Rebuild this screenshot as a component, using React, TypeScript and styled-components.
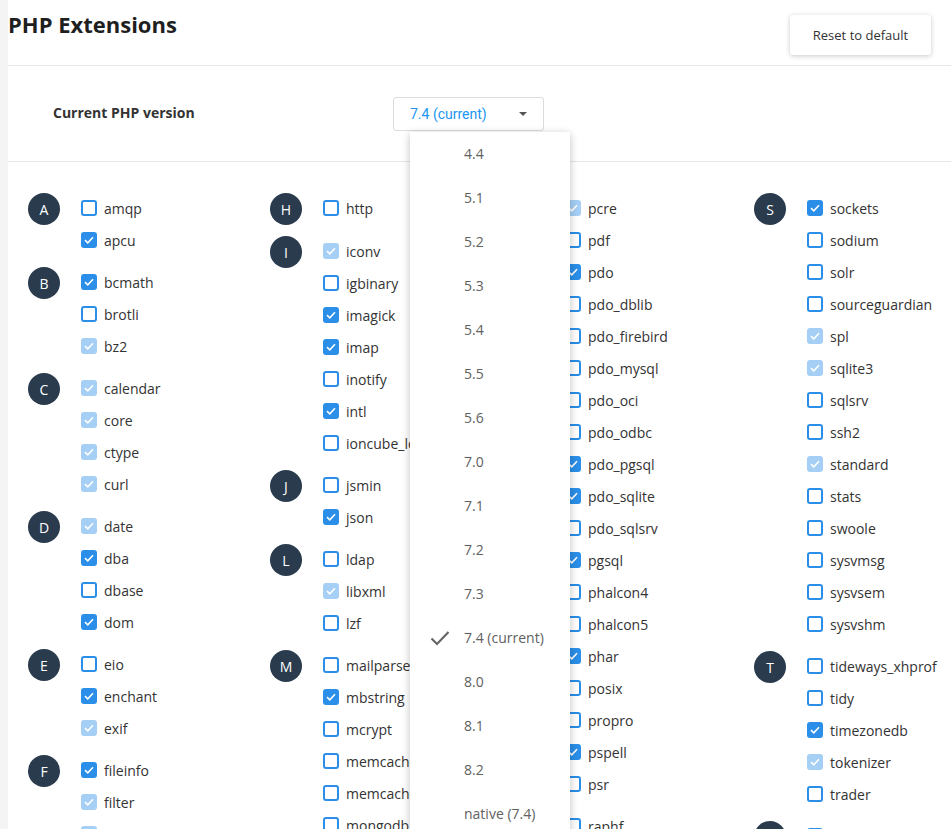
import React from 'react'
import styled, { createGlobalStyle } from 'styled-components'

const GlobalStyle = createGlobalStyle`
  html, body {
    margin: 0;
    padding: 0;
    overflow: hidden;
    background: #f4f4f4;
  }
  body {
    font-family: 'Open Sans', 'Liberation Sans', sans-serif;
    color: #333;
  }
`

type State = 'off' | 'on' | 'fixed'

interface Group {
  letter: string
  items: [string, State][]
}

const COLUMNS: Group[][] = [
  [
    { letter: 'A', items: [['amqp', 'off'], ['apcu', 'on']] },
    { letter: 'B', items: [['bcmath', 'on'], ['brotli', 'off'], ['bz2', 'fixed']] },
    { letter: 'C', items: [['calendar', 'fixed'], ['core', 'fixed'], ['ctype', 'fixed'], ['curl', 'fixed']] },
    { letter: 'D', items: [['date', 'fixed'], ['dba', 'on'], ['dbase', 'off'], ['dom', 'on']] },
    { letter: 'E', items: [['eio', 'off'], ['enchant', 'on'], ['exif', 'fixed']] },
    { letter: 'F', items: [['fileinfo', 'on'], ['filter', 'fixed'], ['ftp', 'fixed']] },
  ],
  [
    { letter: 'H', items: [['http', 'off']] },
    {
      letter: 'I',
      items: [
        ['iconv', 'fixed'],
        ['igbinary', 'off'],
        ['imagick', 'on'],
        ['imap', 'on'],
        ['inotify', 'off'],
        ['intl', 'on'],
        ['ioncube_loader', 'off'],
      ],
    },
    { letter: 'J', items: [['jsmin', 'off'], ['json', 'on']] },
    { letter: 'L', items: [['ldap', 'off'], ['libxml', 'fixed'], ['lzf', 'off']] },
    {
      letter: 'M',
      items: [
        ['mailparse', 'off'],
        ['mbstring', 'on'],
        ['mcrypt', 'off'],
        ['memcache', 'off'],
        ['memcached', 'off'],
        ['mongodb', 'off'],
      ],
    },
  ],
  [
    {
      letter: 'P',
      items: [
        ['pcre', 'fixed'],
        ['pdf', 'off'],
        ['pdo', 'on'],
        ['pdo_dblib', 'off'],
        ['pdo_firebird', 'off'],
        ['pdo_mysql', 'off'],
        ['pdo_oci', 'off'],
        ['pdo_odbc', 'off'],
        ['pdo_pgsql', 'on'],
        ['pdo_sqlite', 'on'],
        ['pdo_sqlsrv', 'off'],
        ['pgsql', 'on'],
        ['phalcon4', 'off'],
        ['phalcon5', 'off'],
        ['phar', 'on'],
        ['posix', 'off'],
        ['propro', 'off'],
        ['pspell', 'on'],
        ['psr', 'off'],
      ],
    },
    { letter: 'R', items: [['raphf', 'off'], ['readline', 'fixed']] },
  ],
  [
    {
      letter: 'S',
      items: [
        ['sockets', 'on'],
        ['sodium', 'off'],
        ['solr', 'off'],
        ['sourceguardian', 'off'],
        ['spl', 'fixed'],
        ['sqlite3', 'fixed'],
        ['sqlsrv', 'off'],
        ['ssh2', 'off'],
        ['standard', 'fixed'],
        ['stats', 'off'],
        ['swoole', 'off'],
        ['sysvmsg', 'off'],
        ['sysvsem', 'off'],
        ['sysvshm', 'off'],
      ],
    },
    {
      letter: 'T',
      items: [
        ['tideways_xhprof', 'off'],
        ['tidy', 'off'],
        ['timezonedb', 'on'],
        ['tokenizer', 'fixed'],
        ['trader', 'off'],
      ],
    },
    { letter: 'U', items: [['uploadprogress', 'off']] },
  ],
]

const VERSIONS = ['4.4', '5.1', '5.2', '5.3', '5.4', '5.5', '5.6', '7.0', '7.1', '7.2', '7.3', '7.4 (current)', '8.0', '8.1', '8.2', 'native (7.4)']

const Page = styled.div`
  margin-left: 8px;
  min-height: 100vh;
  background: #fff;
`
const Header = styled.div`
  display: flex;
  justify-content: space-between;
  align-items: flex-start;
  height: 65px;
  border-bottom: 1px solid #e6e6e6;
  padding-right: 20px;
`
const Title = styled.h1`
  margin: 9px 0 0 0;
  font-size: 22px;
  font-weight: 700;
  color: #1f1f1f;
  line-height: 30px;
`
const ResetButton = styled.button`
  margin-top: 15px;
  width: 141px;
  height: 40px;
  border: none;
  border-radius: 3px;
  background: #fff;
  box-shadow: 0 1px 5px rgba(0, 0, 0, 0.22);
  font-family: 'Open Sans', 'Liberation Sans', sans-serif;
  font-size: 13px;
  color: #333;
`
const VersionRow = styled.div`
  display: flex;
  align-items: center;
  height: 95px;
  padding-left: 45px;
  border-bottom: 1px solid #e6e6e6;
`
const VersionLabel = styled.div`
  width: 340px;
  margin-top: -2px;
  font-size: 14px;
  font-weight: 700;
  color: #333;
`
const SelectWrap = styled.div`
  position: relative;
`
const SelectButton = styled.div`
  display: flex;
  align-items: center;
  justify-content: space-between;
  box-sizing: border-box;
  width: 151px;
  height: 34px;
  padding: 0 16px 0 16px;
  border: 1px solid #dcdcdc;
  border-radius: 3px;
  font-family: Roboto, 'Liberation Sans', sans-serif;
  font-size: 14px;
  color: #2196f3;
`
const Caret = styled.span`
  width: 0;
  height: 0;
  border-left: 4px solid transparent;
  border-right: 4px solid transparent;
  border-top: 4px solid #555;
`
const Menu = styled.div`
  position: absolute;
  top: 35px;
  left: 17px;
  width: 160px;
  background: #fff;
  box-shadow: 0 2px 8px rgba(0, 0, 0, 0.25);
  z-index: 10;
`
const MenuItem = styled.div`
  display: flex;
  align-items: center;
  height: 44px;
  padding-left: 20px;
  font-size: 14px;
  color: #616161;
`
const CheckSlot = styled.span`
  display: flex;
  width: 34px;
`
const Grid = styled.div`
  display: grid;
  grid-template-columns: repeat(4, 242px);
  padding: 30px 0 0 20px;
`
const Column = styled.div`
  display: flex;
  flex-direction: column;
  gap: 10px;
`
const GroupRow = styled.div`
  display: flex;
  align-items: flex-start;
`
const Badge = styled.div`
  flex: none;
  width: 32px;
  height: 32px;
  margin-top: 1px;
  border-radius: 50%;
  background: #2a3b4e;
  color: #fff;
  font-size: 14px;
  display: flex;
  align-items: center;
  justify-content: center;
  margin-right: 21px;
`
const ItemList = styled.div`
  display: flex;
  flex-direction: column;
`
const Item = styled.label`
  display: flex;
  align-items: center;
  height: 32px;
  font-size: 14px;
  color: #333;
  white-space: nowrap;
`
const Box = styled.span<{ $state: State }>`
  flex: none;
  box-sizing: border-box;
  width: 16px;
  height: 16px;
  margin-right: 7px;
  border-radius: 3px;
  display: flex;
  align-items: center;
  justify-content: center;
  border: 2px solid ${({ $state }) => ($state === 'fixed' ? '#a5cff5' : '#2b8ee8')};
  background: ${({ $state }) => ($state === 'on' ? '#2b8ee8' : $state === 'fixed' ? '#a5cff5' : '#fff')};
`

function Tick() {
  return (
    <svg width="10" height="8" viewBox="0 0 10 8">
      <polyline points="1,4.2 3.8,6.8 9,1.2" fill="none" stroke="#fff" strokeWidth="1.6" />
    </svg>
  )
}

function Checkbox({ state }: { state: State }) {
  return <Box $state={state}>{state !== 'off' && <Tick />}</Box>
}

export default function App() {
  return (
    <>
      <GlobalStyle />
      <Page>
        <Header>
          <Title>PHP Extensions</Title>
          <ResetButton>Reset to default</ResetButton>
        </Header>
        <VersionRow>
          <VersionLabel>Current PHP version</VersionLabel>
          <SelectWrap>
            <SelectButton>
              <span>7.4 (current)</span>
              <Caret />
            </SelectButton>
            <Menu>
              {VERSIONS.map((v) => (
                <MenuItem key={v}>
                  <CheckSlot>
                    {v === '7.4 (current)' && (
                      <svg width="20" height="16" viewBox="0 0 20 16">
                        <polyline points="1.5,8.5 7,14 18.5,2" fill="none" stroke="#666" strokeWidth="2.2" />
                      </svg>
                    )}
                  </CheckSlot>
                  {v}
                </MenuItem>
              ))}
            </Menu>
          </SelectWrap>
        </VersionRow>
        <Grid>
          {COLUMNS.map((col, i) => (
            <Column key={i}>
              {col.map((g) => (
                <GroupRow key={g.letter}>
                  <Badge>{g.letter}</Badge>
                  <ItemList>
                    {g.items.map(([name, state]) => (
                      <Item key={name}>
                        <Checkbox state={state} />
                        {name}
                      </Item>
                    ))}
                  </ItemList>
                </GroupRow>
              ))}
            </Column>
          ))}
        </Grid>
      </Page>
    </>
  )
}
